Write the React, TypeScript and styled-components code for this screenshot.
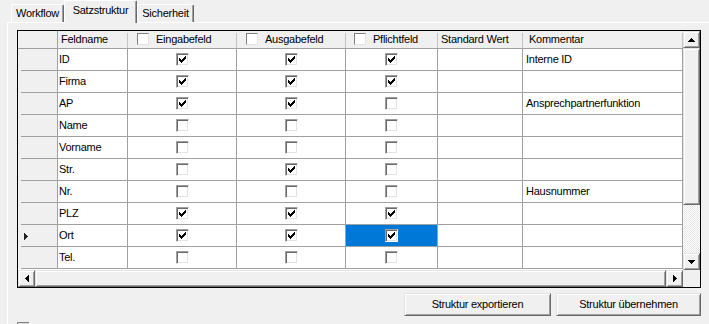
import React from 'react'
import styled, { createGlobalStyle } from 'styled-components'

const GlobalStyle = createGlobalStyle`
  html, body {
    margin: 0;
    padding: 0;
    background: #f0f0f0;
  }
  body {
    font-family: "Liberation Sans", Arial, sans-serif;
    font-size: 11px;
    line-height: 13px;
    letter-spacing: -0.25px;
    color: #000;
  }
  * {
    box-sizing: border-box;
  }
`

type Field = {
  name: string
  ein: boolean
  aus: boolean
  pfl: boolean
  kommentar?: string
}

const fields: Field[] = [
  { name: 'ID', ein: true, aus: true, pfl: true, kommentar: 'Interne ID' },
  { name: 'Firma', ein: true, aus: true, pfl: true },
  { name: 'AP', ein: true, aus: true, pfl: false, kommentar: 'Ansprechpartnerfunktion' },
  { name: 'Name', ein: false, aus: false, pfl: false },
  { name: 'Vorname', ein: false, aus: false, pfl: false },
  { name: 'Str.', ein: false, aus: true, pfl: false },
  { name: 'Nr.', ein: false, aus: false, pfl: false, kommentar: 'Hausnummer' },
  { name: 'PLZ', ein: true, aus: true, pfl: true },
  { name: 'Ort', ein: true, aus: true, pfl: true },
  { name: 'Tel.', ein: false, aus: false, pfl: false },
]

const CURRENT_ROW = 8

// column widths incl. the 1px grid line on the right
const W = { head: 40, name: 70, ein: 109, aus: 109, pfl: 92, std: 85, kom: 160 }

const Window = styled.div`
  width: 709px;
  height: 324px;
  overflow: hidden;
  background: #f0f0f0;
`

const TabStrip = styled.div`
  display: flex;
  align-items: flex-end;
  height: 22px;
  padding-left: 11px;
  position: relative;
  z-index: 1;
`

const Tab = styled.div<{ $active?: boolean; $w: number }>`
  width: ${p => p.$w}px;
  height: ${p => (p.$active ? 23 : 18)}px;
  margin-bottom: ${p => (p.$active ? -1 : 0)}px;
  padding-top: ${p => (p.$active ? 3 : 2)}px;
  text-align: center;
  white-space: nowrap;
  background: #f0f0f0;
  border-top: 1px solid #fff;
  border-left: 1px solid #fff;
  border-right: 1px solid #696969;
  box-shadow: inset -1px 0 #a0a0a0;
  border-radius: 2px 2px 0 0;
`

const TabPanel = styled.div`
  height: 302px;
  margin-left: 7px;
  padding: 7px 0 0 9px;
  border-top: 1px solid #fff;
  border-left: 1px solid #fff;
`

const GridFrame = styled.div`
  width: 684px;
  height: 258px;
  border: 1px solid #000;
  display: grid;
  grid-template-columns: 665px 17px;
  grid-template-rows: 239px 17px;
  background: #fff;
`

const DataArea = styled.div`
  overflow: hidden;
  display: flex;
  flex-direction: column;
`

const HeaderRow = styled.div`
  display: flex;
  flex: 0 0 18px;
`

const Corner = styled.div`
  flex: 0 0 ${W.head}px;
  height: 18px;
  background: #f0f0f0;
  border-right: 1px solid #a0a0a0;
  border-bottom: 1px solid #a0a0a0;
`

const HeaderCell = styled.div<{ $w: number; $pad: number }>`
  flex: 0 0 ${p => p.$w}px;
  height: 18px;
  display: flex;
  align-items: center;
  gap: 7px;
  padding-left: ${p => p.$pad}px;
  white-space: nowrap;
  overflow: hidden;
  border-bottom: 1px solid #a0a0a0;
  background: linear-gradient(#c4c4c4, #c4c4c4) no-repeat right 0 top 2px / 1px 15px, #f0f0f0;
`

const HeaderBox = styled.span`
  flex: 0 0 12px;
  height: 12px;
  margin-top: -2px;
  background: #fff;
  border: 1px solid;
  border-color: #808080 #e3e3e3 #e3e3e3 #808080;
`

const Row = styled.div`
  display: flex;
  flex: 0 0 22px;
`

const RowHeader = styled.div`
  flex: 0 0 ${W.head}px;
  height: 22px;
  display: flex;
  align-items: center;
  padding-left: 6px;
  border-right: 1px solid #a0a0a0;
  background: linear-gradient(#a0a0a0, #a0a0a0) no-repeat 3px 100% / calc(100% - 3px) 1px, #f0f0f0;
`

const Cell = styled.div<{ $w: number; $center?: boolean; $pad?: number; $selected?: boolean }>`
  flex: 0 0 ${p => p.$w}px;
  height: 22px;
  display: flex;
  align-items: center;
  justify-content: ${p => (p.$center ? 'center' : 'flex-start')};
  padding-left: ${p => p.$pad ?? 0}px;
  white-space: nowrap;
  overflow: hidden;
  border-right: 1px solid #a0a0a0;
  border-bottom: 1px solid #a0a0a0;
  background: ${p => (p.$selected ? '#0078d7' : '#fff')};
`

const Box = styled.span`
  width: 13px;
  height: 13px;
  display: inline-flex;
  align-items: center;
  justify-content: center;
  background: #fff;
  border: 1px solid;
  border-color: #a0a0a0 #fff #fff #a0a0a0;
  box-shadow: inset 1px 1px #696969, inset -1px -1px #e3e3e3;
`

const Bevel = styled.div`
  display: flex;
  align-items: center;
  justify-content: center;
  background: #f0f0f0;
  border: 1px solid;
  border-color: #e3e3e3 #696969 #696969 #e3e3e3;
  box-shadow: inset 1px 1px #fff, inset -1px -1px #a0a0a0;
`

const ScrollButton = styled(Bevel)`
  flex: 0 0 17px;
  width: 17px;
  height: 17px;
`

const VScroll = styled.div`
  display: flex;
  flex-direction: column;
  background: #f0f0f0;
`

const HScroll = styled.div`
  display: flex;
  background: #f0f0f0;
`

const Thumb = styled(Bevel)<{ $size?: number }>`
  flex: ${p => (p.$size ? `0 0 ${p.$size}px` : '1 1 auto')};
`

const Track = styled.div`
  flex: 1 1 auto;
  background: repeating-conic-gradient(#fff 0 25%, #e6e6e6 0 50%) 0 0 / 2px 2px;
`

const ScrollCorner = styled.div`
  background: #f0f0f0;
`

const ButtonRow = styled.div`
  width: 684px;
  display: flex;
  justify-content: flex-end;
  gap: 5px;
  margin-top: 5px;
`

const PushButton = styled(Bevel)<{ $w: number }>`
  width: ${p => p.$w}px;
  height: 23px;
  font: inherit;
  white-space: nowrap;
`

const BottomBox = styled.div`
  width: 12px;
  height: 12px;
  margin-top: 6px;
  background: #dcdcdc;
  border-top: 1px solid #808080;
  border-left: 1px solid #a0a0a0;
`

const ARROWS = {
  up: { w: 7, h: 4, d: 'M3 0h1v1h1v1h1v1h1v1H0V3h1V2h1V1h1z' },
  down: { w: 7, h: 4, d: 'M0 0h7v1H6v1H5v1H4v1H3V3H2V2H1V1H0z' },
  left: { w: 4, h: 7, d: 'M4 0v7H3V6H2V5H1V4H0V3h1V2h1V1h1V0z' },
  right: { w: 4, h: 7, d: 'M0 0h1v1h1v1h1v1h1v1H3v1H2v1H1v1H0z' },
}

function Arrow({ dir, color = '#000' }: { dir: keyof typeof ARROWS; color?: string }) {
  const a = ARROWS[dir]
  return (
    <svg width={a.w} height={a.h} viewBox={`0 0 ${a.w} ${a.h}`} shapeRendering="crispEdges">
      <path d={a.d} fill={color} />
    </svg>
  )
}

function CheckBox({ checked }: { checked: boolean }) {
  return (
    <Box>
      {checked && (
        <svg width="11" height="11" viewBox="0 0 11 11" shapeRendering="crispEdges">
          <path d="M2 4h1v1h1v1h1V5h1V4h1V3h1V2h1v3H8v1H7v1H6v1H5v1H4V8H3V7H2z" fill="#000" />
        </svg>
      )}
    </Box>
  )
}

export default function App() {
  return (
    <Window>
      <GlobalStyle />
      <TabStrip>
        <Tab $w={53}>Workflow</Tab>
        <Tab $w={73} $active>Satzstruktur</Tab>
        <Tab $w={57}>Sicherheit</Tab>
      </TabStrip>
      <TabPanel>
        <GridFrame>
          <DataArea>
            <HeaderRow>
              <Corner />
              <HeaderCell $w={W.name} $pad={3}>Feldname</HeaderCell>
              <HeaderCell $w={W.ein} $pad={9}><HeaderBox />Eingabefeld</HeaderCell>
              <HeaderCell $w={W.aus} $pad={9}><HeaderBox />Ausgabefeld</HeaderCell>
              <HeaderCell $w={W.pfl} $pad={8}><HeaderBox />Pflichtfeld</HeaderCell>
              <HeaderCell $w={W.std} $pad={3}>Standard Wert</HeaderCell>
              <HeaderCell $w={W.kom} $pad={6}>Kommentar</HeaderCell>
            </HeaderRow>
            {fields.map((f, i) => (
              <Row key={f.name}>
                <RowHeader>{i === CURRENT_ROW && <Arrow dir="right" color="#222" />}</RowHeader>
                <Cell $w={W.name} $pad={1}>{f.name}</Cell>
                <Cell $w={W.ein} $center><CheckBox checked={f.ein} /></Cell>
                <Cell $w={W.aus} $center><CheckBox checked={f.aus} /></Cell>
                <Cell $w={W.pfl} $center $selected={i === CURRENT_ROW}><CheckBox checked={f.pfl} /></Cell>
                <Cell $w={W.std} />
                <Cell $w={W.kom} $pad={3}>{f.kommentar}</Cell>
              </Row>
            ))}
          </DataArea>
          <VScroll>
            <ScrollButton><Arrow dir="up" /></ScrollButton>
            <Thumb $size={157} />
            <Track />
            <ScrollButton><Arrow dir="down" /></ScrollButton>
          </VScroll>
          <HScroll>
            <ScrollButton><Arrow dir="left" /></ScrollButton>
            <Thumb />
            <ScrollButton><Arrow dir="right" /></ScrollButton>
          </HScroll>
          <ScrollCorner />
        </GridFrame>
        <ButtonRow>
          <PushButton $w={147}>Struktur exportieren</PushButton>
          <PushButton $w={145}>Struktur übernehmen</PushButton>
        </ButtonRow>
        <BottomBox />
      </TabPanel>
    </Window>
  )
}
